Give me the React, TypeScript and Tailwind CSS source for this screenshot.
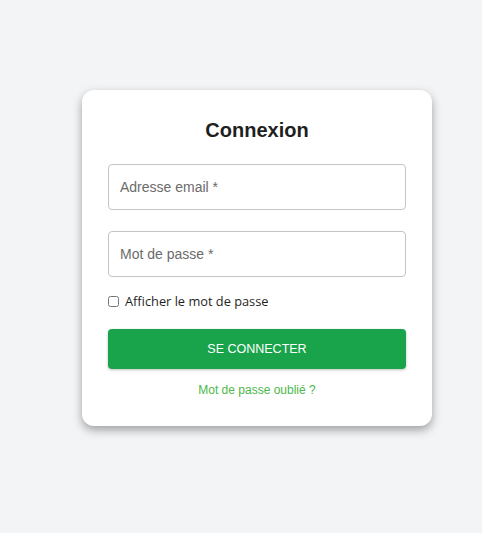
import React, { useState } from 'react';

export default function App() {
  const [show, setShow] = useState(false);

  return (
    <div className="min-h-[533px] w-full bg-[#f3f4f6] pt-[90px] pl-[82px]" style={{ fontFamily: '"Liberation Sans", Arial, sans-serif' }}>
      <div className="w-[350px] rounded-[12px] bg-white px-[26px] pt-[28px] pb-[27px] shadow-[0_4px_10px_rgba(0,0,0,0.35)]">
        <h1 className="text-center text-[20px] font-bold leading-[24px] text-[#1f1f1f]">Connexion</h1>

        <div className="mt-[22px] flex flex-col gap-[21px]">
          <div className="flex h-[46px] items-center rounded-[4px] border border-[#c4c4c4] px-[11px] text-[14px] text-[#6b6b6b]">
            Adresse email *
          </div>
          <div className="flex h-[46px] items-center rounded-[4px] border border-[#c4c4c4] px-[11px] text-[14px] text-[#6b6b6b]">
            Mot de passe *
          </div>
        </div>

        <label className="mt-[15px] flex items-center gap-[6px] text-[12.8px] text-[#1f1f1f]" style={{ fontFamily: '"Open Sans", sans-serif' }}>
          <input type="checkbox" checked={show} onChange={() => setShow(!show)} className="m-0 h-[11px] w-[11px]" />
          Afficher le mot de passe
        </label>

        <button className="mt-[18px] flex h-[40px] w-full items-center justify-center rounded-[4px] bg-[#19a44b] text-[12.5px] font-medium text-white shadow-[0_1px_3px_rgba(0,0,0,0.25)]">
          SE CONNECTER
        </button>

        <div className="mt-[12px] text-center text-[12px] text-[#4cb84a]">Mot de passe oublié ?</div>
      </div>
    </div>
  );
}
